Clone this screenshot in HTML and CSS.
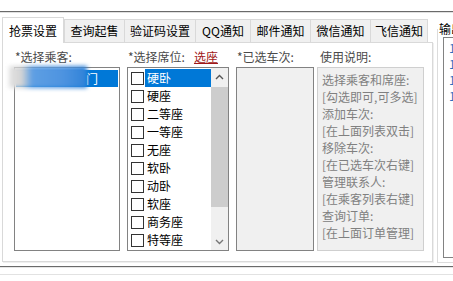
FILE: index.html
```html
<!DOCTYPE html>
<html lang="zh-CN">
<head>
<meta charset="utf-8">
<title>抢票设置</title>
<link rel="stylesheet" href="styles.css">
</head>
<body>
<div class="app">
  <div class="topline"></div>
  <div class="main">
    <div class="tabctl">
      <div class="tabs">
        <div class="tab active">抢票设置</div>
        <div class="tab w60">查询起售</div>
        <div class="tab w71">验证码设置</div>
        <div class="tab w55">QQ通知</div>
        <div class="tab w60">邮件通知</div>
        <div class="tab w60">微信通知</div>
        <div class="tab w58 last">飞信通知</div>
      </div>
      <div class="panel">
        <div class="col c1">
          <div class="lbl">*选择乘客:</div>
          <div class="box list">
            <div class="item sel"><span class="tail">门</span></div>
            <div class="blur"></div>
          </div>
        </div>
        <div class="col c2">
          <div class="lbl">*选择席位:<a class="link">选座</a></div>
          <div class="box seats">
            <div class="checks">
              <div class="ck"><span class="cb"></span><span class="ct on">硬卧</span></div>
              <div class="ck"><span class="cb"></span><span class="ct">硬座</span></div>
              <div class="ck"><span class="cb"></span><span class="ct">二等座</span></div>
              <div class="ck"><span class="cb"></span><span class="ct">一等座</span></div>
              <div class="ck"><span class="cb"></span><span class="ct">无座</span></div>
              <div class="ck"><span class="cb"></span><span class="ct">软卧</span></div>
              <div class="ck"><span class="cb"></span><span class="ct">动卧</span></div>
              <div class="ck"><span class="cb"></span><span class="ct">软座</span></div>
              <div class="ck"><span class="cb"></span><span class="ct">商务座</span></div>
              <div class="ck"><span class="cb"></span><span class="ct">特等座</span></div>
            </div>
            <div class="sbar">
              <div class="sbtn"><svg width="9" height="6" viewBox="0 0 9 6"><path d="M1 5 L4.5 1.5 L8 5" fill="none" stroke="#555" stroke-width="1.4"/></svg></div>
              <div class="strack"><div class="thumb"></div></div>
              <div class="sbtn"><svg width="9" height="6" viewBox="0 0 9 6"><path d="M1 1 L4.5 4.5 L8 1" fill="none" stroke="#777" stroke-width="1.4"/></svg></div>
            </div>
          </div>
        </div>
        <div class="col c3">
          <div class="lbl">*已选车次:</div>
          <div class="box gray"></div>
        </div>
        <div class="col c4">
          <div class="lbl l4">使用说明:</div>
          <div class="box help">
            <div>选择乘客和席座:</div>
            <div>[勾选即可,可多选]</div>
            <div>添加车次:</div>
            <div>[在上面列表双击]</div>
            <div>移除车次:</div>
            <div>[在已选车次右键]</div>
            <div>管理联系人:</div>
            <div>[在乘客列表右键]</div>
            <div>查询订单:</div>
            <div>[在上面订单管理]</div>
          </div>
        </div>
      </div>
    </div>
    <fieldset class="group">
      <legend>输出</legend>
      <div class="outlist">
        <div>1</div>
        <div>1</div>
        <div>1</div>
        <div>1</div>
      </div>
    </fieldset>
  </div>
  <div class="bottom">
    <div class="dline"></div>
    <div class="lline l1"></div>
    <div class="lline l2"></div>
  </div>
</div>
</body>
</html>
```
FILE: styles.css
```css
* { box-sizing: border-box; }
html, body {
  margin: 0;
  padding: 0;
  background: #ffffff;
  overflow: hidden;
  width: 453px;
  height: 281px;
}
body {
  font-family: "Noto Sans CJK SC", "Microsoft YaHei", sans-serif;
  font-size: 12px;
  color: #000;
}
.app { padding-top: 11px; width: 453px; }
.topline {
  height: 2px;
  border-top: 1px solid #6a6a6a;
  border-bottom: 1px solid #e0e0e0;
}
.main {
  display: flex;
  align-items: flex-start;
  margin-top: 4px;
}
.tabctl {
  margin-left: 2px;
  width: 431px;
  flex: none;
}
.tabs {
  display: flex;
  align-items: flex-end;
  height: 25px;
  padding-left: 2px;
}
.tab {
  height: 23px;
  line-height: 22px;
  text-align: center;
  background: #f0f0f0;
  border-top: 1px solid #d9d9d9;
  border-left: 1px solid #d9d9d9;
  white-space: nowrap;
  flex: none;
}
.tab.last { border-right: 1px solid #d9d9d9; }
.w60 { width: 60px; }
.w71 { width: 71px; }
.w55 { width: 55px; }
.w58 { width: 58px; }
.tab.active {
  position: relative;
  z-index: 1;
  width: 62px;
  height: 26px;
  margin-left: -2px;
  margin-bottom: -1px;
  line-height: 25px;
  background: #fff;
  border: 1px solid #d9d9d9;
  border-bottom: none;
  padding-bottom: 2px;
}
.panel {
  height: 220px;
  border: 1px solid #d9d9d9;
  background: #fff;
  display: flex;
  padding: 6px 0 0 11px;
  box-shadow: 1px 1px 0 #efefef;
}
.col { flex: none; display: flex; flex-direction: column; }
.c1 { width: 106px; margin-right: 7px; }
.c2 { width: 102px; margin-right: 7px; }
.c3 { width: 78px; margin-right: 3px; }
.c4 { width: 107px; }
.lbl {
  height: 16px;
  line-height: 16px;
  margin-bottom: 2px;
  padding-left: 1px;
  color: #4a4a4a;
  white-space: nowrap;
}
.lbl.l4 { padding-left: 3px; }
.link {
  margin-left: 9px;
  color: #a01818;
  text-decoration: underline;
}
.box {
  height: 184px;
  border: 1px solid #828282;
}
.list {
  position: relative;
  background: #fff;
  padding: 2px 1px;
}
.item {
  height: 17px;
  line-height: 17px;
}
.item.sel {
  background: #0078d7;
  color: #fff;
  padding-left: 70px;
}
.blur {
  position: absolute;
  left: -6px;
  top: -2px;
  width: 78px;
  height: 22px;
  background: linear-gradient(to right, #e2e2e2 0%, #d4d4d4 16%, #5e9fe3 30%, #4d93e0 70%, #2f82d8 100%);
  filter: blur(2px);
}
.seats {
  display: flex;
  background: #fff;
}
.checks {
  flex: 1;
  padding-top: 1px;
}
.ck {
  display: flex;
  align-items: center;
  height: 18px;
}
.cb {
  width: 13px;
  height: 13px;
  border: 1px solid #333;
  background: #fff;
  margin-left: 3px;
  flex: none;
}
.ct {
  flex: 1;
  height: 18px;
  line-height: 18px;
  margin-left: 1px;
  padding-left: 2px;
}
.ct.on {
  background: #0078d7;
  color: #fff;
}
.sbar {
  width: 17px;
  display: flex;
  flex-direction: column;
  background: #f0f0f0;
}
.sbtn {
  height: 17px;
  display: flex;
  align-items: center;
  justify-content: center;
}
.strack {
  flex: 1;
  padding-top: 2px;
}
.thumb {
  height: 120px;
  background: #cdcdcd;
}
.gray { background: #f0f0f0; }
.help {
  background: #f0f0f0;
  border-color: #cfcfcf;
  color: #808080;
  padding: 3px 0 0 4px;
  line-height: 17px;
  white-space: nowrap;
}
.group {
  margin: 4px 0 0 4px;
  padding: 0 0 4px 5px;
  border: 1px solid #dcdcdc;
  width: 40px;
  flex: none;
  min-width: 0;
}
.group legend {
  padding: 0 1px;
  height: 16px;
  line-height: 16px;
  margin-left: -5px;
  white-space: nowrap;
}
.outlist {
  height: 221px;
  border: 1px solid #828282;
  padding: 2px 0 0 5px;
  line-height: 16px;
  color: #2f6fc0;
}
.bottom { margin-top: 3px; }
.dline {
  height: 2px;
  border-top: 1px solid #6a6a6a;
  border-bottom: 1px solid #e6e6e6;
}
.lline {
  height: 1px;
  background: #e2e2e2;
}
.l1 { margin-top: 6px; }
.l2 { margin-top: 6px; }
```
